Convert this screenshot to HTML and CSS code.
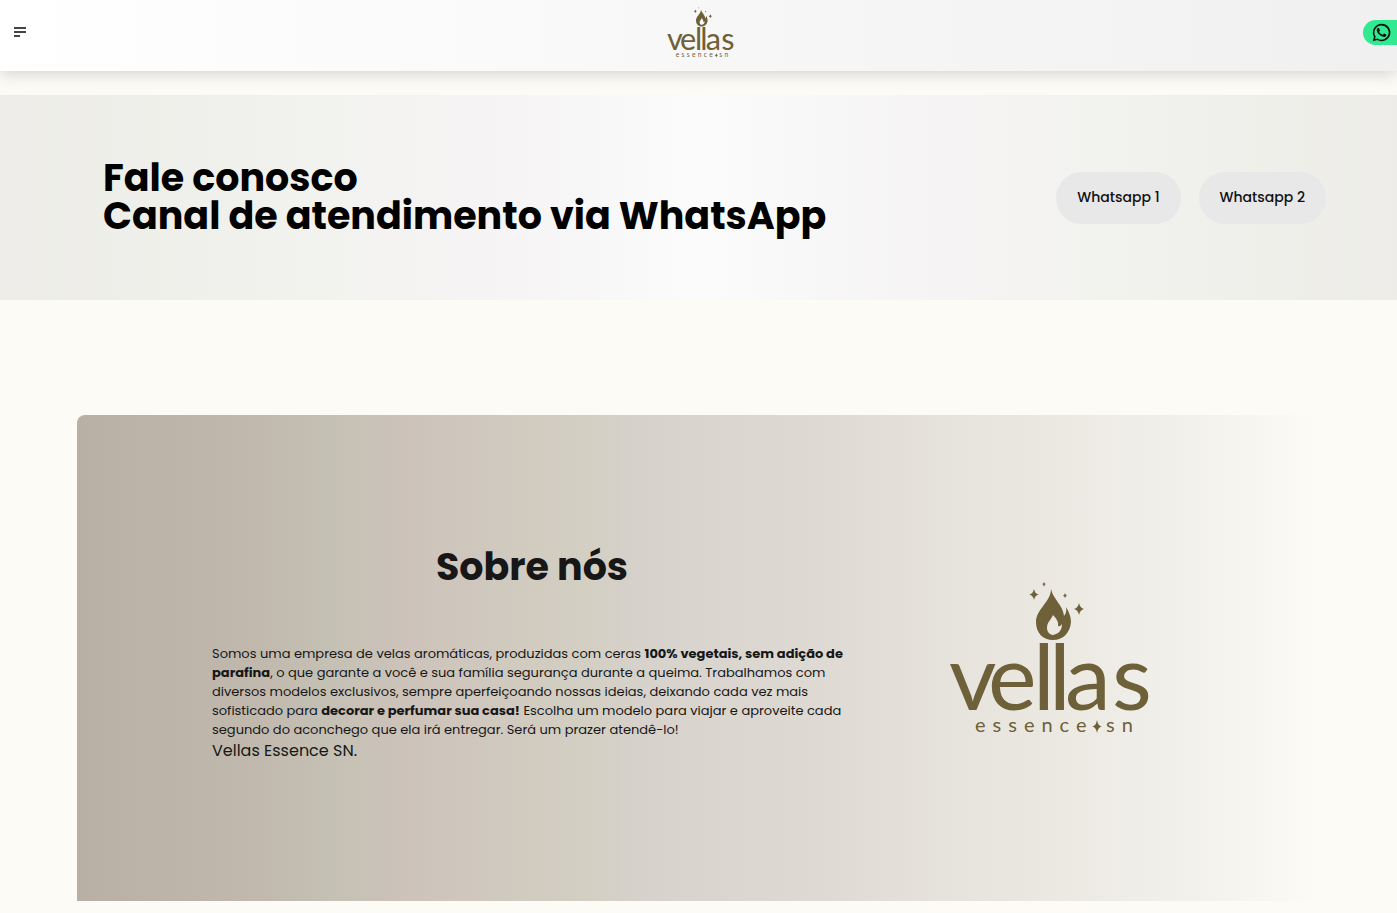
FILE: index.html
```html
<!DOCTYPE html>
<html lang="pt-BR">
<head>
<meta charset="utf-8">
<meta name="viewport" content="width=device-width, initial-scale=1">
<title>Vellas Essence SN</title>
<link rel="stylesheet" href="styles.css">
</head>
<body>
<header class="topbar">
  <button class="menu" type="button" aria-label="Menu">
    <svg width="12" height="10" viewBox="0 0 12 10"><path d="M0 0h12v2H0zM0 4h12v2H0zM0 8h6v2H0z"/></svg>
  </button>
  <a class="brand" href="#" aria-label="Vellas Essence SN">
    <svg class="logo" viewBox="0 0 204 152">
      <path fill-rule="evenodd" d="M102 7C104 17 114 23 115 34Q118 31 117 25Q122 33 122 40C121 51 114 58 104 58C94 58 87 51 87 40C87 27 102 20 102 7ZM104 33C102 38 98 40 98 46C98 50 101 53 104 53C109 52 113 49 113 42Q111 45 109 44C110 40 107 36 104 33Z"/>
      <path d="M85 7Q86 12 90 12.500Q86 13 85 18Q84 13 80 12.500Q84 12 85 7ZM130 21Q131 26 135 27Q131 28 130 33Q129 28 125 27Q129 26 130 21ZM95 0Q95.500 2 97 2Q95.500 2 95 5Q94.500 2 93 2Q94.500 2 95 0ZM116 11Q116.500 13 118 13.500Q116.500 14 116 16Q115.500 14 114 13.500Q115.500 13 116 11ZM148 138Q149 144 153 144.500Q149 145 148 151Q147 145 143 144.500Q147 144 148 138Z"/>
      <text class="logo-name" x="0 39 84 100 116 163" y="128">vellas</text>
      <text class="logo-sub" x="26" y="150">essence</text>
      <text class="logo-sub" x="157" y="150">sn</text>
    </svg>
  </a>
  <a class="chip" href="#contato" aria-label="WhatsApp">
    <svg width="19" height="19" viewBox="0 0 24 24"><path d="M17.472 14.382c-.297-.149-1.758-.867-2.030-.967-.273-.099-.471-.148-.670.150-.197.297-.767.966-.940 1.164-.173.199-.347.223-.644.075-.297-.150-1.255-.463-2.390-1.475-.883-.788-1.480-1.761-1.653-2.059-.173-.297-.018-.458.130-.606.134-.133.298-.347.446-.520.149-.174.198-.298.298-.497.099-.198.050-.371-.025-.520-.075-.149-.669-1.612-.916-2.207-.242-.579-.487-.500-.669-.510-.173-.008-.371-.010-.570-.010-.198 0-.520.074-.792.372-.272.297-1.040 1.016-1.040 2.479 0 1.462 1.065 2.875 1.213 3.074.149.198 2.096 3.200 5.077 4.487.709.306 1.262.489 1.694.625.712.227 1.360.195 1.871.118.571-.085 1.758-.719 2.006-1.413.248-.694.248-1.289.173-1.413-.074-.124-.272-.198-.570-.347M12 1A11 11 0 0 0 2.500 17.500L1 23l5.700-1.500A11 11 0 1 0 12 1m0 2a9 9 0 1 1-4.900 16.550l-3.300.850.900-3.200A9 9 0 0 1 12 3"/></svg>
  </a>
</header>

<main>
  <section class="contact" id="contato">
    <h1 class="contact-title">Fale conosco<br>Canal de atendimento via WhatsApp</h1>
    <div class="contact-actions">
      <a class="pill" href="#">Whatsapp 1</a>
      <a class="pill" href="#">Whatsapp 2</a>
    </div>
  </section>

  <section class="about">
    <div class="about-copy">
      <h2 class="about-title">Sobre nós</h2>
      <p class="about-text">Somos uma empresa de velas aromáticas, produzidas com ceras <strong>100% vegetais, sem adição de parafina</strong>, o que garante a você e sua família segurança durante a queima. Trabalhamos com diversos modelos exclusivos, sempre aperfeiçoando nossas ideias, deixando cada vez mais sofisticado para <strong>decorar e perfumar sua casa!</strong> Escolha um modelo para viajar e aproveite cada segundo do aconchego que ela irá entregar. Será um prazer atendê-lo!</p>
      <p class="about-sign">Vellas Essence SN.</p>
    </div>
    <svg class="logo about-logo" viewBox="0 0 204 152" role="img" aria-label="Vellas Essence SN">
      <path fill-rule="evenodd" d="M102 7C104 17 114 23 115 34Q118 31 117 25Q122 33 122 40C121 51 114 58 104 58C94 58 87 51 87 40C87 27 102 20 102 7ZM104 33C102 38 98 40 98 46C98 50 101 53 104 53C109 52 113 49 113 42Q111 45 109 44C110 40 107 36 104 33Z"/>
      <path d="M85 7Q86 12 90 12.500Q86 13 85 18Q84 13 80 12.500Q84 12 85 7ZM130 21Q131 26 135 27Q131 28 130 33Q129 28 125 27Q129 26 130 21ZM95 0Q95.500 2 97 2Q95.500 2 95 5Q94.500 2 93 2Q94.500 2 95 0ZM116 11Q116.500 13 118 13.500Q116.500 14 116 16Q115.500 14 114 13.500Q115.500 13 116 11ZM148 138Q149 144 153 144.500Q149 145 148 151Q147 145 143 144.500Q147 144 148 138Z"/>
      <text class="logo-name" x="0 39 84 100 116 163" y="128">vellas</text>
      <text class="logo-sub" x="26" y="150">essence</text>
      <text class="logo-sub" x="157" y="150">sn</text>
    </svg>
  </section>
</main>
</body>
</html>
```

FILE: styles.css
```css
* { box-sizing: border-box; }
body {
  margin: 0;
  background: #fcfbf5;
  color: #171717;
  font-family: Poppins, Inter, sans-serif;
}
h1, h2, p { margin: 0; }
a { color: inherit; text-decoration: none; }

.logo { display: block; fill: #6e6038; overflow: visible; }
.logo-name { font: 400 92px Lato, sans-serif; }
.logo-sub { font: 400 20px Lato, sans-serif; letter-spacing: 7px; }

.topbar {
  display: grid;
  grid-template-columns: 1fr auto 1fr;
  align-items: center;
  height: 71px;
  padding: 0 0 6px 4px;
  background: linear-gradient(90deg, #fff, #f0f0f0);
  box-shadow: 0 2px 16px rgba(0, 0, 0, .18);
}
.menu {
  justify-self: start;
  margin-left: 10px;
  padding: 0 0 2px;
  border: 0;
  background: none;
  fill: #444;
  line-height: 0;
}
.brand .logo { width: 68px; height: 51px; }
.chip {
  justify-self: end;
  display: flex;
  align-items: center;
  height: 25px;
  padding: 0 6px 0 9px;
  border-radius: 13px 0 0 13px;
  background: #30e990;
  fill: #111;
}

.contact {
  display: flex;
  align-items: center;
  justify-content: space-between;
  gap: 24px;
  min-height: 205px;
  margin-top: 24px;
  padding: 0 71px 0 103px;
  background: linear-gradient(90deg, #edece8, #f0f1ec 17%, #f6f4f5 36%, #fbfbfb 50%, #f6f4f5 66%, #f0f1ec 85%, #edece8);
}
.contact-title {
  padding-bottom: 2px;
  color: #000;
  font-size: 38px;
  line-height: 38px;
}
.contact-actions { display: flex; gap: 18px; }
.pill {
  padding: 15px 21px 17px;
  border-radius: 26px;
  background: #e8e8e8;
  color: #111;
  font-size: 14px;
  font-weight: 500;
  line-height: 20px;
  white-space: nowrap;
}

.about {
  display: flex;
  align-items: center;
  justify-content: space-between;
  min-height: 486px;
  margin: 115px 77px 12px;
  padding: 0 167px 0 135px;
  border-radius: 8px 8px 0 0;
  background: linear-gradient(90deg, #b8b0a4, #c2b9ae 15%, #c4c0b4 20%, #cdc3ba 27%, #d3cfc3 41%, #d7d2cc 46%, #dfdad4 61%, #e6e3dc 70%, #ebe8e1 78%, #f2f1ec 90%, #fcfbf5);
}
.about-copy { width: 640px; padding-bottom: 6px; }
.about-title {
  margin-bottom: 58px;
  font-size: 38px;
  line-height: 38px;
  text-align: center;
}
.about-text { font-size: 13px; line-height: 19px; }
.about-sign { font-size: 16px; line-height: 24px; }
.about-logo { width: 204px; height: 152px; }
```
